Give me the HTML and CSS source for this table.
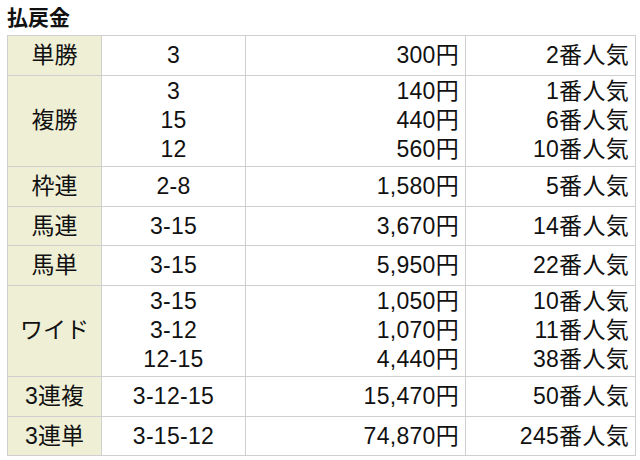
FILE: index.html
```html
<!DOCTYPE html>
<html lang="ja">
<head>
<meta charset="utf-8">
<title>払戻金</title>
<link rel="stylesheet" href="styles.css">
</head>
<body>
<div class="payout">
  <h2 class="payout-title">払戻金</h2>
  <table class="payout-table">
    <colgroup>
      <col class="c-type">
      <col class="c-num">
      <col class="c-yen">
      <col class="c-pop">
    </colgroup>
    <tbody>
      <tr class="single">
        <th>単勝</th>
        <td class="num">3</td>
        <td class="yen">300円</td>
        <td class="pop">2番人気</td>
      </tr>
      <tr class="multi">
        <th>複勝</th>
        <td class="num">3<br>15<br>12</td>
        <td class="yen">140円<br>440円<br>560円</td>
        <td class="pop">1番人気<br>6番人気<br>10番人気</td>
      </tr>
      <tr class="single">
        <th>枠連</th>
        <td class="num">2-8</td>
        <td class="yen">1,580円</td>
        <td class="pop">5番人気</td>
      </tr>
      <tr class="single">
        <th>馬連</th>
        <td class="num">3-15</td>
        <td class="yen">3,670円</td>
        <td class="pop">14番人気</td>
      </tr>
      <tr class="single">
        <th>馬単</th>
        <td class="num">3-15</td>
        <td class="yen">5,950円</td>
        <td class="pop">22番人気</td>
      </tr>
      <tr class="multi">
        <th>ワイド</th>
        <td class="num">3-15<br>3-12<br>12-15</td>
        <td class="yen">1,050円<br>1,070円<br>4,440円</td>
        <td class="pop">10番人気<br>11番人気<br>38番人気</td>
      </tr>
      <tr class="single">
        <th>3連複</th>
        <td class="num">3-12-15</td>
        <td class="yen">15,470円</td>
        <td class="pop">50番人気</td>
      </tr>
      <tr class="single">
        <th>3連単</th>
        <td class="num">3-15-12</td>
        <td class="yen">74,870円</td>
        <td class="pop">245番人気</td>
      </tr>
    </tbody>
  </table>
</div>
</body>
</html>
```

FILE: styles.css
```css
html, body {
  margin: 0;
  padding: 0;
  background: #ffffff;
}

body {
  font-family: "Liberation Sans", "Noto Sans CJK JP", sans-serif;
  color: #111111;
}

.payout {
  padding: 6px 6px 0 7px;
}

.payout-title {
  margin: 0 0 5px 0;
  font-size: 21px;
  line-height: 24px;
  font-weight: bold;
}

.payout-table {
  width: 628px;
  border-collapse: collapse;
  table-layout: fixed;
  font-size: 23px;
  line-height: 29px;
}

.c-type { width: 94px; }
.c-num { width: 144px; }
.c-yen { width: 220px; }
.c-pop { width: 170px; }

.payout-table th,
.payout-table td {
  border: 1px solid #cfcfcf;
  padding: 5px 6px 4.5px;
  vertical-align: middle;
  font-weight: normal;
}

.payout-table .multi th,
.payout-table .multi td {
  padding: 1.5px 6px 2px;
}

.payout-table th {
  background: #efefd6;
  text-align: center;
}

.payout-table .num {
  text-align: center;
  letter-spacing: 0.3px;
}

.payout-table .yen,
.payout-table .pop {
  text-align: right;
  letter-spacing: 0.3px;
}
```
